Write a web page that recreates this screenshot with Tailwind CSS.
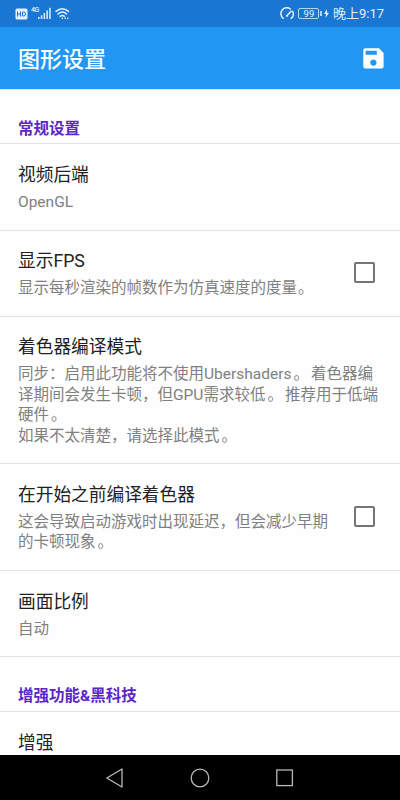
<!DOCTYPE html>
<html lang="zh-CN">
<head>
  <meta charset="UTF-8">
  <meta name="viewport" content="width=device-width, initial-scale=1.0">
  <title>图形设置</title>
  <script src="https://cdn.jsdelivr.net/npm/@tailwindcss/browser@4"></script>
</head>
<body class="bg-[#fefefe] font-[Roboto,'Noto_Sans_CJK_SC',sans-serif]">
  <div class="w-[400px] h-[800px] flex flex-col overflow-hidden">
    <!-- Status bar -->
    <div class="h-[27px] shrink-0 bg-[#1976d2] flex items-center justify-between pl-[15px] pr-[16px] text-[#e3f1fc]">
      <div class="flex items-center">
        <svg class="w-[13px] h-[12px]" viewBox="0 0 13 12">
          <rect x="0.5" y="0.5" width="12" height="11" rx="1.5" fill="currentColor"/>
          <path d="M2.5 3.5v5M5.5 3.5v5M2.5 6h3M7.5 4v4h1.2q1.8 0 1.8-2t-1.8-2z" fill="none" stroke="#1976d2" stroke-width="1"/>
        </svg>
        <span class="ml-[3px] mb-[7px] w-[8px] text-[7px] leading-none font-medium whitespace-nowrap tracking-[-0.6px]">4G</span>
        <svg class="w-[13px] h-[13px] -ml-[1px]" viewBox="0 0 13 13" fill="currentColor">
          <rect x="0" y="10" width="1.5" height="2"/>
          <rect x="2.8" y="8.3" width="1.5" height="3.7"/>
          <rect x="5.6" y="6" width="1.5" height="6"/>
          <rect x="8.4" y="3.4" width="1.5" height="8.6"/>
          <rect x="11.2" y="0.8" width="1.5" height="11.2"/>
        </svg>
        <svg class="w-[15px] h-[13px] ml-[4px]" viewBox="0 0 15 13" fill="none" stroke="currentColor" stroke-width="1.4" stroke-linecap="round">
          <path d="M1 4.4q6.2-5.4 12.6 0M3 7q4.3-3.8 8.6 0M5.1 9.4q2.2-1.8 4.4 0"/>
          <path d="M7.3 11.3h.1M10.2 11.3h.1M12.8 11.3h.1" stroke-width="1.6"/>
        </svg>
      </div>
      <div class="flex items-center">
        <svg class="w-[15px] h-[13px]" viewBox="0 0 15 13" fill="none" stroke="currentColor" stroke-width="1.5" stroke-linecap="round">
          <path d="M3.2 11.3A5.7 5.7 0 0 1 10.4 2M12.6 4.3a5.7 5.7 0 0 1-1.4 7M11 4.2L7.2 8.6"/>
          <circle cx="7" cy="8.8" r="1.1" fill="currentColor" stroke="none"/>
        </svg>
        <div class="ml-[3px] w-[21px] h-[11px] border border-[#b5d6f3] rounded-[2px] text-[9.5px] leading-[9.5px] text-center">99</div>
        <div class="w-[1.5px] h-[5px] bg-[#b5d6f3] ml-[1px]"></div>
        <svg class="w-[5px] h-[9px] ml-[2px]" viewBox="0 0 5 9" fill="currentColor"><path d="M3 0L0 5h2L1.6 9 5 3.7H3z"/></svg>
        <span class="ml-[4px] text-[13px] leading-[20px] mt-px whitespace-nowrap">晚上9:17</span>
      </div>
    </div>

    <!-- Toolbar -->
    <div class="h-[62px] shrink-0 bg-[#2196f3] flex items-center justify-between pl-[18px] pr-[16px] text-white">
      <h1 class="text-[22px] leading-[30px] font-medium mt-[3px]">图形设置</h1>
      <svg class="w-[21px] h-[21px]" viewBox="0 0 21 21">
        <path fill="currentColor" fill-rule="evenodd" d="M2.3.3H16L20.6 5v13.6a2 2 0 0 1-2 2H2.3a2 2 0 0 1-2-2V2.3a2 2 0 0 1 2-2zM2.6 2.7v4.1h11.2V2.7zM10.4 11.4a3.2 3.2 0 1 0 .01 0z"/>
      </svg>
    </div>

    <!-- Settings list -->
    <div class="flex-1 overflow-hidden text-[15.5px] leading-[20.5px] text-[#808080] shadow-[inset_0_1px_0_#d5e8f6]">
      <div class="h-[55px] border-b border-[#e2e2e2] pl-[18px] pt-[29.5px] font-bold text-[#5b27c8]">常规设置</div>

      <div class="h-[86.5px] border-b border-[#e2e2e2] px-[18px] pt-[19px]">
        <div class="text-[17.7px] leading-[24px] text-[#212121]">视频后端</div>
        <div class="mt-[4.5px]">OpenGL</div>
      </div>

      <div class="h-[86.5px] border-b border-[#e2e2e2] pl-[18px] pr-[25px] pt-[18px] flex justify-between">
        <div>
          <div class="text-[17.7px] leading-[24px] text-[#212121]">显示FPS</div>
          <div class="mt-[5px] whitespace-nowrap">显示每秒渲染的帧数作为仿真速度的度量<span class="ml-[1px]">。</span></div>
        </div>
        <div class="w-[21px] h-[21px] mt-[13px] border-2 border-[#757575] rounded-[2px]"></div>
      </div>

      <div class="h-[147px] border-b border-[#e2e2e2] px-[18px] pt-[18px]">
        <div class="text-[17.7px] leading-[24px] text-[#212121]">着色器编译模式</div>
        <div class="mt-[5.2px] whitespace-nowrap">同步：启用此功能将不使用Ubershaders<span class="mx-[2px]">。</span>着色器编<br>译期间会发生卡顿，但GPU需求较低<span class="mx-[2px]">。</span>推荐用于低端<br>硬件<span class="mx-[2px]">。</span><br>如果不太清楚，请选择此模式<span class="mx-[2px]">。</span></div>
      </div>

      <div class="h-[107px] border-b border-[#e2e2e2] pl-[18px] pr-[25px] pt-[19px] flex justify-between">
        <div>
          <div class="text-[17.7px] leading-[24px] text-[#212121]">在开始之前编译着色器</div>
          <div class="mt-[4.5px] whitespace-nowrap">这会导致启动游戏时出现延迟，但会减少早期<br>的卡顿现象<span class="mx-[2px]">。</span></div>
        </div>
        <div class="w-[21px] h-[21px] mt-[23px] border-2 border-[#757575] rounded-[2px]"></div>
      </div>

      <div class="h-[86px] border-b border-[#e2e2e2] px-[18px] pt-[19px]">
        <div class="text-[17.7px] leading-[24px] text-[#212121]">画面比例</div>
        <div class="mt-[4.5px]">自动</div>
      </div>

      <div class="h-[54.5px] border-b border-[#e2e2e2] pl-[18px] pt-[29px] font-bold text-[#5b27c8]">增强功能&amp;黑科技</div>

      <div class="px-[18px] pt-[19px]">
        <div class="text-[17.7px] leading-[24px] text-[#212121]">增强</div>
      </div>
    </div>

    <!-- Navigation bar -->
    <div class="h-[45px] shrink-0 bg-black flex items-center justify-center gap-[65px] text-[#b8b8b8]">
      <svg class="w-[20px] h-[20px]" viewBox="0 0 20 20" fill="none" stroke="currentColor" stroke-width="1.3" stroke-linejoin="round"><path d="M17 1v18L1.8 10z"/></svg>
      <svg class="w-[20px] h-[20px]" viewBox="0 0 20 20" fill="none" stroke="currentColor" stroke-width="1.3"><circle cx="10" cy="10" r="8.8"/></svg>
      <svg class="w-[20px] h-[20px]" viewBox="0 0 20 20" fill="none" stroke="currentColor" stroke-width="1.3"><rect x="1.8" y="2" width="15.6" height="15.6"/></svg>
    </div>
  </div>
</body>
</html>
